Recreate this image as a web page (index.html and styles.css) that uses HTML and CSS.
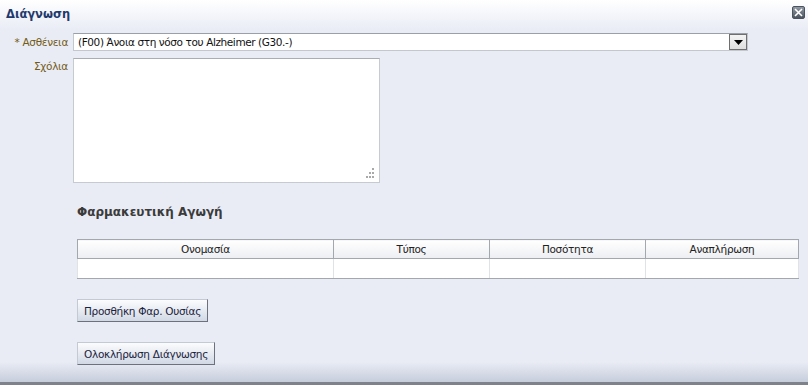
FILE: index.html
```html
<!doctype html>
<html lang="el">

<head>
    <title>Διάγνωση</title>
    <link rel="stylesheet" href="styles.css">
</head>

<body>
    <div class="dialog">
        <div class="dialog-header">
            <span class="dialog-title">Διάγνωση</span>
            <span class="close-btn" title="Κλείσιμο">
                <svg width="9" height="9" viewBox="0 0 9 9">
                    <path d="M1 1 L8 8 M8 1 L1 8" stroke="#fff" stroke-width="1.6" />
                </svg>
            </span>
        </div>

        <div class="dialog-body">
            <div class="form-row">
                <label class="field-label"><span class="req">*</span> Ασθένεια</label>
                <div class="select-box">
                    <span class="select-text">(F00) Άνοια στη νόσο του Alzheimer (G30.-)</span>
                    <span class="select-btn">
                        <svg width="9" height="5" viewBox="0 0 9 5">
                            <polygon points="0,0 9,0 4.5,5" fill="#000" />
                        </svg>
                    </span>
                </div>
            </div>

            <div class="form-row top">
                <label class="field-label comment-label">Σχόλια</label>
                <div class="textarea-box">
                    <textarea class="comments"></textarea>
                    <span class="grip">
                        <i class="d1"></i><i class="d2"></i><i class="d3"></i>
                        <i class="d4"></i><i class="d5"></i><i class="d6"></i>
                    </span>
                </div>
            </div>

            <div class="section">
                <h3 class="section-title">Φαρμακευτική Αγωγή</h3>

                <table class="drug-table">
                    <tr>
                        <th class="c1">Ονομασία</th>
                        <th class="c2">Τύπος</th>
                        <th class="c3">Ποσότητα</th>
                        <th class="c4">Αναπλήρωση</th>
                    </tr>
                    <tr>
                        <td></td>
                        <td></td>
                        <td></td>
                        <td></td>
                    </tr>
                </table>

                <button class="btn">Προσθήκη Φαρ. Ουσίας</button>
                <button class="btn">Ολοκλήρωση Διάγνωσης</button>
            </div>
        </div>
    </div>
</body>

</html>
```

FILE: styles.css
```css
html, body {
    margin: 0;
    padding: 0;
}

body {
    font-family: "DejaVu Sans", "Liberation Sans", sans-serif;
    font-size: 10.5px;
}

.dialog {
    width: 808px;
    height: 385px;
    box-sizing: border-box;
    border-bottom: 3px solid #7e838b;
    background: linear-gradient(to bottom, #ffffff 0, #e9ecf5 30px, #e9ecf5 362px, #c6cddb 382px);
    overflow: hidden;
}

.dialog-header {
    height: 27px;
    display: flex;
    align-items: center;
    justify-content: space-between;
    padding: 0 3px 0 6px;
}

.dialog-title {
    font-weight: bold;
    font-size: 11.5px;
    color: #1f3a6c;
}

.close-btn {
    width: 13px;
    height: 13px;
    margin-top: -3px;
    box-sizing: border-box;
    border: 1px solid #4a525c;
    border-radius: 2px;
    background: linear-gradient(to bottom, #9199a4, #4a535e);
    display: flex;
    align-items: center;
    justify-content: center;
}

.dialog-body {
    padding-top: 6px;
}

.form-row {
    display: flex;
    align-items: center;
    margin-bottom: 7px;
}

.form-row.top {
    align-items: flex-start;
}

.field-label {
    width: 68px;
    margin-right: 5px;
    text-align: right;
    color: #735a16;
    letter-spacing: -0.3px;
}

.comment-label {
    padding-top: 2px;
}

.req {
    color: #735a16;
}

.select-box {
    width: 675px;
    height: 18px;
    box-sizing: border-box;
    border: 1px solid #c3c7ce;
    border-top-color: #9aa0a8;
    background: #fff;
    display: flex;
    align-items: center;
    justify-content: space-between;
}

.select-text {
    padding-left: 4px;
    color: #111;
    letter-spacing: -0.4px;
}

.select-btn {
    width: 18px;
    height: 16px;
    box-sizing: border-box;
    border: 1px solid #6f6f6f;
    background: linear-gradient(to bottom, #f4f4f4, #dedede);
    display: flex;
    align-items: center;
    justify-content: center;
}

.textarea-box {
    position: relative;
    width: 307px;
    height: 125px;
}

.comments {
    width: 100%;
    height: 100%;
    box-sizing: border-box;
    border: 1px solid #c6cad1;
    border-top-color: #a9aeb5;
    background: #fff;
    resize: none;
    margin: 0;
    display: block;
}

.grip {
    position: absolute;
    right: 6px;
    bottom: 5px;
    width: 10px;
    height: 10px;
}

.grip i {
    position: absolute;
    width: 2px;
    height: 2px;
    background: #a9a9a9;
}

.grip .d1 { right: 0; top: 0; }
.grip .d2 { right: 3px; top: 4px; }
.grip .d3 { right: 0; top: 4px; }
.grip .d4 { right: 6px; top: 8px; }
.grip .d5 { right: 3px; top: 8px; }
.grip .d6 { right: 0; top: 8px; }

.section {
    margin-left: 77px;
}

.section-title {
    margin: 21px 0 0 0;
    font-size: 12px;
    font-weight: bold;
    color: #3b3b3b;
    line-height: 16px;
}

.drug-table {
    margin-top: 19px;
    width: 722px;
    border-collapse: collapse;
    border: 1px solid #a3a7ae;
    background: #fff;
}

.drug-table th {
    height: 18px;
    padding: 0;
    font-weight: normal;
    color: #222;
    border: 1px solid #a3a7ae;
    background: linear-gradient(to bottom, #ffffff, #eceef2);
    letter-spacing: -0.3px;
}

.drug-table td {
    height: 19px;
    padding: 0;
    border: 1px solid #e0e2e6;
    border-bottom-color: #a3a7ae;
}

.drug-table .c1 { width: 255px; }
.drug-table .c2 { width: 155px; }
.drug-table .c3 { width: 155px; }

.btn {
    display: block;
    margin-top: 20px;
    height: 23px;
    padding: 0 6px;
    font-family: inherit;
    font-size: 10.5px;
    color: #1c2340;
    letter-spacing: -0.3px;
    border: 1px solid #c4cad4;
    border-right-color: #6c727c;
    border-bottom-color: #6c727c;
    background: linear-gradient(to bottom, #fbfcfd, #d2d9e5);
    cursor: pointer;
}
```
